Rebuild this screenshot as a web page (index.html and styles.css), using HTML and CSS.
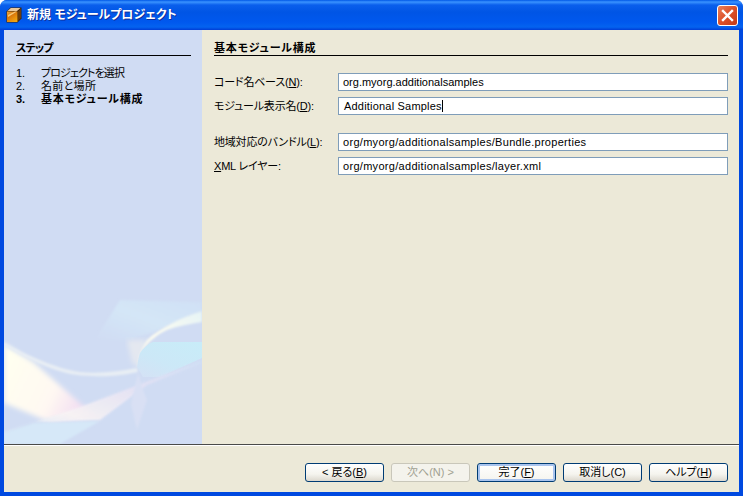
FILE: index.html
```html
<!DOCTYPE html>
<html lang="ja">
<head>
<meta charset="utf-8">
<title>新規 モジュールプロジェクト</title>
<link rel="stylesheet" href="styles.css">
</head>
<body>
<div class="window">
  <header class="titlebar">
    <svg class="app-icon" width="16" height="16" viewBox="0 0 16 16">
      <defs>
        <linearGradient id="cube" x1="0" y1="0" x2="0.7" y2="1">
          <stop offset="0" stop-color="#f0a63c"/>
          <stop offset="0.45" stop-color="#d9780c"/>
          <stop offset="1" stop-color="#f2a50f"/>
        </linearGradient>
      </defs>
      <path d="M0.5 4.5 L4.5 0.5 H15.5 V11.5 L11.5 15.5 H0.5 Z" fill="#3c2208"/>
      <path d="M1.5 4 L4.8 1 H14.5 L11 4 Z" fill="#e8c79a"/>
      <path d="M12 4.5 L15 1.8 V11 L12 14 Z" fill="#6b3d0c"/>
      <path d="M1 4.5 H11.5 V15 H1 Z" fill="url(#cube)"/>
      <path d="M2 8 L9 4.5 H11 L2 10 Z" fill="#f6c878"/>
    </svg>
    <span class="title">新規 モジュールプロジェクト</span>
    <button class="close" aria-label="閉じる">
      <svg width="13" height="13" viewBox="0 0 13 13"><path d="M2 2 L11 11 M11 2 L2 11" stroke="#fff" stroke-width="2.4" stroke-linecap="square"/></svg>
    </button>
  </header>
  <div class="client">
    <div class="main">
      <aside class="steps">
        <svg class="swoosh" width="198" height="160" viewBox="0 0 198 160">
          <defs>
            <linearGradient id="pink" x1="0" y1="0.3" x2="1" y2="0.7">
              <stop offset="0" stop-color="#fffff0"/>
              <stop offset="0.55" stop-color="#fff8f2"/>
              <stop offset="0.85" stop-color="#f3e0f2"/>
              <stop offset="1" stop-color="#dfdcf2"/>
            </linearGradient>
            <linearGradient id="sky" x1="0.9" y1="0" x2="0.1" y2="1">
              <stop offset="0" stop-color="#c8ecf8"/>
              <stop offset="0.6" stop-color="#cce8f7"/>
              <stop offset="1" stop-color="#d4e2f5"/>
            </linearGradient>
            <linearGradient id="band" x1="0" y1="1" x2="1" y2="0">
              <stop offset="0" stop-color="#d6e8f8"/>
              <stop offset="0.3" stop-color="#f8f4f4"/>
              <stop offset="0.65" stop-color="#e6e2f4"/>
              <stop offset="1" stop-color="#d0e0f5"/>
            </linearGradient>
            <linearGradient id="haze" x1="0" y1="1" x2="1" y2="0">
              <stop offset="0" stop-color="#d0dcf3"/>
              <stop offset="0.5" stop-color="#d4e6f7"/>
              <stop offset="1" stop-color="#d0e0f5"/>
            </linearGradient>
            <linearGradient id="arc" x1="0" y1="1" x2="1" y2="0">
              <stop offset="0" stop-color="#e8ecf0"/>
              <stop offset="0.4" stop-color="#fdfcf0"/>
              <stop offset="1" stop-color="#e6f4f6"/>
            </linearGradient>
            <filter id="soft"><feGaussianBlur stdDeviation="2.5"/></filter>
            <filter id="softer"><feGaussianBlur stdDeviation="0.8"/></filter>
          </defs>
          <path d="M116 16 L91 56 L123 56 L150 48 L198 27 V18 Z" fill="url(#haze)" filter="url(#softer)"/>
          <path d="M123 56 L143 56 L133 83 L128 78 Z" fill="#e4e8f0" filter="url(#soft)"/>
          <path d="M0 60 L29 78 L76 119 L96 134 L46 138 L0 119 Z" fill="url(#pink)" filter="url(#soft)"/>
          <path d="M0 58 C14 67 26 72 36 76 C52 83 64 86 76 88 C96 90 116 87 133 84 L134 88 C116 92 100 93 89 92 C72 92 60 89 46 84 C28 77 14 70 0 62 Z" fill="#e8eef4" filter="url(#softer)"/>
          <path d="M198 27 C176 34 156 44 143 56 C137 64 133 74 133 83 L135 83 C136 74 138 70 139 66 C145 57 154 50 163 46 C174 42 186 40 198 38 Z" fill="url(#arc)" filter="url(#softer)"/>
          <path d="M133 83 C134 76 135 72 136 69 C139 64 144 60 149 58 H198 V74 L156 93 L139 93 Z" fill="url(#sky)"/>
          <path d="M0 148 L76 123 L129 103 L198 76 V79 L143 101 L96 136 L29 138 L0 150 Z" fill="url(#band)" filter="url(#softer)" opacity="0.9"/>
          <path d="M0 149 L30 139 L96 137 L56 160 H0 Z" fill="#d6e8f8" filter="url(#softer)"/>
          <path d="M134 89 L139 106 L143 116 L133 146 L127 120 Z" fill="#d9e0f4" filter="url(#softer)"/>
        </svg>
        <h2 class="steps-heading">ステップ</h2>
        <ol class="steps-list">
          <li class="step"><span class="num">1.</span><span class="step-text tight">プロジェクトを選択</span></li>
          <li class="step"><span class="num">2.</span><span class="step-text">名前と場所</span></li>
          <li class="step current"><span class="num">3.</span><span class="step-text">基本モジュール構成</span></li>
        </ol>
      </aside>
      <section class="panel">
        <h1 class="panel-heading">基本モジュール構成</h1>
        <div class="form">
          <div class="row"><label class="label">コード名ベース(<u>N</u>):</label><div class="field">org.myorg.additionalsamples</div></div>
          <div class="row"><label class="label">モジュール表示名(<u>D</u>):</label><div class="field editing"><span class="value">Additional Samples</span></div></div>
          <div class="row spaced"><label class="label">地域対応のバンドル(<u>L</u>):</label><div class="field path">org/myorg/additionalsamples/Bundle.properties</div></div>
          <div class="row"><label class="label">
<u>X</u>ML レイヤー:</label><div class="field path">org/myorg/additionalsamples/layer.xml</div></div>
        </div>
      </section>
    </div>
    <footer class="footer">
      <button class="btn">&lt; 戻る(<u>B</u>)</button>
      <button class="btn disabled" disabled>次へ(N) &gt;</button>
      <button class="btn default">完了(<u>F</u>)</button>
      <button class="btn">取消し(C)</button>
      <button class="btn">ヘルプ(<u>H</u>)</button>
    </footer>
  </div>
</div>
</body>
</html>
```
FILE: styles.css
```css
* { box-sizing: border-box; }
html, body { margin: 0; padding: 0; }
body {
  width: 743px;
  height: 496px;
  overflow: hidden;
  background: #fff;
  font-family: "Liberation Sans", "Noto Sans CJK JP", sans-serif;
  font-size: 11px;
  font-feature-settings: "palt";
  color: #000;
}
.window {
  width: 743px;
  height: 496px;
  display: flex;
  flex-direction: column;
  background: #0049e0;
  border-radius: 7px 7px 0 0;
  overflow: hidden;
}
.titlebar {
  height: 30px;
  flex: none;
  display: flex;
  align-items: center;
  padding: 0 5px 0 6px;
  background: linear-gradient(180deg, #0058e6 0, #3a93ff 2px, #0a5fec 5px, #0055e5 12px, #0058ee 22px, #0463f0 27px, #003dd6 30px);
}
.app-icon { flex: none; }
.title {
  flex: 1;
  margin-left: 5px;
  color: #fff;
  font-size: 12px;
  font-weight: 700;
  text-shadow: 1px 1px 0 #0f2f9c;
  line-height: 16px;
}
.close {
  width: 21px;
  height: 21px;
  flex: none;
  padding: 0;
  display: flex;
  align-items: center;
  justify-content: center;
  border: 1px solid #fff;
  border-radius: 3px;
  background: linear-gradient(135deg, #e9805a 0, #dc5028 50%, #c23a16 100%);
}
.client {
  flex: 1;
  min-height: 0;
  margin: 0 4px 4px;
  display: flex;
  flex-direction: column;
  background: #ece9d8;
}
.main {
  flex: none;
  height: 414px;
  display: flex;
}
.steps {
  position: relative;
  width: 198px;
  flex: none;
  padding: 11px 11px 0 12px;
  background: #d0dcf3;
  overflow: hidden;
}
.swoosh { position: absolute; left: 0; bottom: 0; }
.steps-heading, .panel-heading {
  position: relative;
  margin: 0;
  height: 15px;
  font-size: 11px;
  font-weight: 700;
  line-height: 15px;
  border-bottom: 1px solid #000;
}
.steps-heading { letter-spacing: -0.8px; }
.panel-heading { letter-spacing: 0.8px; }
.steps-list {
  position: relative;
  margin: 11px 0 0;
  padding: 0;
  list-style: none;
}
.step {
  display: flex;
  height: 13px;
  line-height: 13px;
  font-size: 11px;
}
.step-text { letter-spacing: 0.3px; }
.step-text.tight { letter-spacing: -0.9px; }
.step.current { font-weight: 700; }
.step.current .step-text { letter-spacing: 0.8px; }
.num { width: 25px; flex: none; }
.panel {
  flex: 1;
  min-width: 0;
  padding: 11px 11px 0 12px;
}
.form {
  margin-top: 17px;
  display: flex;
  flex-direction: column;
  gap: 6px;
}
.row {
  display: flex;
  align-items: center;
  height: 18px;
}
.row.spaced { margin-top: 12px; }
.label {
  width: 124px;
  flex: none;
  padding-bottom: 2px;
  font-size: 11px;
  letter-spacing: -0.2px;
  white-space: nowrap;
}
.field {
  flex: 1;
  height: 18px;
  padding: 0 4px;
  border: 1px solid #7f9db9;
  background: #fff;
  font-size: 11px;
  line-height: 16px;
  white-space: nowrap;
}
.field.path { letter-spacing: 0.3px; }
.field.editing { padding-left: 5px; letter-spacing: 0.2px; }
.value { border-right: 1px solid #000; }
.footer {
  flex: 1;
  display: flex;
  justify-content: flex-end;
  align-items: flex-start;
  gap: 7px;
  padding: 18px 11px 0 0;
  border-top: 1px solid #4a4a48;
  box-shadow: inset 0 1px 0 #fff;
}
.btn {
  width: 79px;
  height: 19px;
  padding: 0;
  border: 1px solid #003c74;
  border-radius: 3px;
  background: linear-gradient(180deg, #fff 0, #f5f4ee 60%, #dcd8ce 100%);
  color: #000;
  font-family: inherit;
  font-feature-settings: inherit;
  font-size: 11px;
  line-height: 15px;
}
.btn.disabled {
  border-color: #c9c7ba;
  background: #f4f3ec;
  color: #a1a192;
}
.btn.default {
  box-shadow: inset 0 0 0 2px #a9c4ee;
  background: linear-gradient(180deg, #fff 0, #f5f4ee 100%);
}
```
